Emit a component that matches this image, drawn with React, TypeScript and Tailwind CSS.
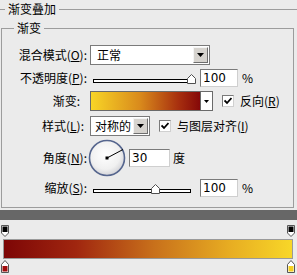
import React from "react";

const font = "font-['Noto_Sans_CJK_SC','Noto_Sans',sans-serif]";

const Arrow = () => (
  <svg width="7" height="4" viewBox="0 0 7 4">
    <path d="M0 0 H7 L3.5 4 Z" fill="#000" />
  </svg>
);

const ArrowButton = ({ className = "" }: { className?: string }) => (
  <div
    className={`flex items-center justify-center bg-[#d6d3ce] border border-t-[#f4f4f4] border-l-[#f4f4f4] border-b-[#6e6e6e] border-r-[#6e6e6e] ${className}`}
  >
    <Arrow />
  </div>
);

const Checkbox = () => (
  <div className="w-[12px] h-[12px] bg-white border border-[#7a7a7a] border-r-[#d0d0d0] border-b-[#d0d0d0] flex items-center justify-center">
    <svg width="8" height="8" viewBox="0 0 8 8">
      <path d="M0.5 3.5 L3 6 L7.5 1" stroke="#000" strokeWidth="1.8" fill="none" />
    </svg>
  </div>
);

const Slider = ({ pos }: { pos: number }) => (
  <div className="relative w-[98px] h-[12px] ml-[5px]">
    <div className="absolute left-0 right-0 top-[7px] h-[4px] border border-black bg-white" />
    <svg
      className="absolute top-[2px]"
      style={{ left: pos }}
      width="9"
      height="10"
      viewBox="0 0 9 10"
    >
      <path d="M0.5 9.5 V4.5 L4.5 0.5 L8.5 4.5 V9.5 Z" fill="#fff" stroke="#505050" />
    </svg>
  </div>
);

const NumInput = ({ value, w = "w-[38px]" }: { value: string; w?: string }) => (
  <div
    className={`${w} h-[18px] bg-white border border-[#7a7a7a] border-r-[#cfcfcf] border-b-[#cfcfcf] flex items-center pl-[2px] text-[12px] font-['DejaVu_Sans',sans-serif] text-black`}
  >
    {value}
  </div>
);

const Label = ({ children, pr = "pr-[1px]" }: { children: React.ReactNode; pr?: string }) => (
  <div className={`w-[86px] shrink-0 text-right ${pr} text-[12px] leading-none`}>{children}</div>
);

const TopStop = () => (
  <svg width="8" height="12" viewBox="0 0 8 12">
    <path d="M0.5 0.5 H7.5 V8 L4 11.5 L0.5 8 Z" fill="#fff" stroke="#555" />
    <rect x="1.5" y="1.5" width="5" height="5.5" fill="#000" />
  </svg>
);

const BottomStop = ({ color }: { color: string }) => (
  <svg width="8" height="13" viewBox="0 0 8 13">
    <path d="M0.5 12.5 H7.5 V4.5 L4 0.5 L0.5 4.5 Z" fill="#fff" stroke="#555" />
    <rect x="1.5" y="6" width="5" height="5.5" fill={color} />
  </svg>
);

export default function App() {
  return (
    <div className={`w-[297px] h-[275px] bg-[#ebebeb] overflow-hidden text-black ${font}`}>
      <div className="flex items-center h-[18px]">
        <div className="w-[5px] h-px bg-[#9c9c9c]" />
        <span className="px-[3px] text-[12px] leading-none">渐变叠加</span>
        <div className="flex-1 h-px bg-[#9c9c9c]" />
      </div>

      <fieldset className="ml-[1px] mt-[2px] w-[293px] border border-[#9c9c9c] px-0 pb-[9px] pt-0 m-0">
        <legend className="ml-[12px] px-[3px] text-[12px] leading-[16px] h-[16px]">渐变</legend>

        <div className="flex items-center h-[20px] mt-[9px]">
          <Label>
            混合模式(<u>O</u>):
          </Label>
          <div className="ml-[2px] w-[120px] h-[20px] bg-white border border-[#7a7a7a] flex items-center justify-between pl-[6px] pr-[1px]">
            <span className="text-[12px] leading-none">正常</span>
            <ArrowButton className="w-[15px] h-[16px]" />
          </div>
        </div>

        <div className="flex items-center h-[20px] mt-[3px]">
          <Label>
            不透明度(<u>P</u>):
          </Label>
          <Slider pos={94} />
          <div className="ml-[9px]">
            <NumInput value="100" />
          </div>
          <span className="ml-[4px] text-[12px] leading-none">%</span>
        </div>

        <div className="flex items-center h-[20px] mt-[3px]">
          <Label pr="pr-[8px]">渐变:</Label>
          <div className="ml-[2px] w-[123px] h-[20px] border border-[#6a6a6a] flex">
            <div className="flex-1 bg-[linear-gradient(to_right,#f8d526,#d98a1c_45%,#a8300f_80%,#850808)]" />
            <div className="w-[12px] bg-white border-l border-[#6a6a6a] flex items-center justify-center">
              <svg width="5" height="3" viewBox="0 0 5 3">
                <path d="M0 0 H5 L2.5 3 Z" fill="#000" />
              </svg>
            </div>
          </div>
          <div className="ml-[9px]">
            <Checkbox />
          </div>
          <span className="ml-[6px] text-[12px] leading-none">
            反向(<u>R</u>)
          </span>
        </div>

        <div className="flex items-center h-[20px] mt-[5px]">
          <Label pr="pr-[4px]">
            样式(<u>L</u>):
          </Label>
          <div className="ml-[2px] w-[60px] h-[20px] bg-white border border-[#7a7a7a] flex items-center justify-between pl-[4px] pr-[1px]">
            <span className="text-[12px] leading-none">对称的</span>
            <ArrowButton className="w-[15px] h-[16px]" />
          </div>
          <div className="ml-[9px]">
            <Checkbox />
          </div>
          <span className="ml-[6px] text-[12px] leading-none">
            与图层对齐(<u>I</u>)
          </span>
        </div>

        <div className="flex items-center h-[37px] mt-[3px]">
          <Label>
            角度(<u>N</u>):
          </Label>
          <svg width="38" height="38" viewBox="0 0 38 38" className="shrink-0">
            <defs>
              <radialGradient id="dial" cx="45%" cy="40%" r="60%">
                <stop offset="0%" stopColor="#ffffff" />
                <stop offset="70%" stopColor="#f0f0f0" />
                <stop offset="100%" stopColor="#d4d4d8" />
              </radialGradient>
            </defs>
            <circle cx="19" cy="19" r="17.5" fill="url(#dial)" stroke="#56668e" strokeWidth="1.6" />
            <line x1="19" y1="19" x2="35" y2="10.5" stroke="#000" strokeWidth="1" />
            <rect x="17.5" y="17.5" width="3" height="3" fill="#000" />
          </svg>
          <div className="ml-[3px]">
            <NumInput value="30" w="w-[41px]" />
          </div>
          <span className="ml-[3px] text-[12px] leading-none">度</span>
        </div>

        <div className="flex items-center h-[20px] mt-[2px]">
          <Label>
            缩放(<u>S</u>):
          </Label>
          <Slider pos={58} />
          <div className="ml-[9px]">
            <NumInput value="100" />
          </div>
          <span className="ml-[4px] text-[12px] leading-none">%</span>
        </div>
      </fieldset>

      <div className="mt-[2px] h-[10px] bg-[#676767]" />

      <div className="mt-[5px] ml-[1px] w-[294px] flex justify-between h-[12px]">
        <TopStop />
        <TopStop />
      </div>
      <div className="mt-[2px] ml-[3px] w-[290px] h-[20px] border border-[#9a9a9a] bg-[linear-gradient(to_right,#7d0606,#a0260f_25%,#c8701b_52%,#e7ac22_78%,#f8d728)]" />
      <div className="mt-[1px] ml-[1px] w-[294px] flex justify-between h-[13px]">
        <BottomStop color="#a00d0d" />
        <BottomStop color="#f5d020" />
      </div>
    </div>
  );
}
